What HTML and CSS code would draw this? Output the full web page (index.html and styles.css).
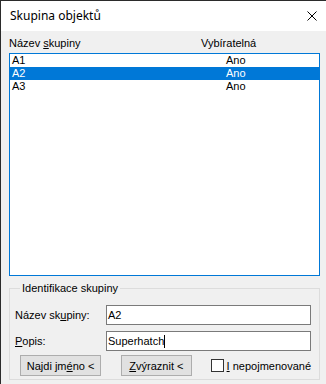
FILE: index.html
```html
<!DOCTYPE html>
<html lang="cs">
<head>
    <meta charset="UTF-8" />
    <meta name="viewport" content="width=device-width, initial-scale=1.0" />
    <title>Skupina objektů</title>
    <link rel="stylesheet" href="styles.css">
</head>
<body>

    <div class="window">
        <div class="titlebar">
            <span class="title">Skupina objektů</span>
            <svg class="close-icon" width="10" height="10" viewBox="0 0 10 10">
                <path d="M0.5 0.5 L9.5 9.5 M9.5 0.5 L0.5 9.5" stroke="#000" stroke-width="1" fill="none" />
            </svg>
        </div>

        <div class="content">
            <div class="list-header">
                <span class="col-name">Název <u>s</u>kupiny</span>
                <span class="col-select">Vybíratelná</span>
            </div>

            <div class="group-list">
                <div class="row">
                    <span class="col-name">A1</span>
                    <span class="col-value">Ano</span>
                </div>
                <div class="row selected">
                    <span class="col-name">A2</span>
                    <span class="col-value">Ano</span>
                </div>
                <div class="row">
                    <span class="col-name">A3</span>
                    <span class="col-value">Ano</span>
                </div>
            </div>

            <fieldset class="group-box">
                <legend>Identifikace skupiny</legend>

                <div class="field">
                    <label>Název sk<u>u</u>piny:</label>
                    <div class="textbox">A2</div>
                </div>
                <div class="field">
                    <label><u>P</u>opis:</label>
                    <div class="textbox">Superhatch<span class="caret"></span></div>
                </div>

                <div class="actions">
                    <button class="btn btn-find">Najdi jm<u>é</u>no &lt;</button>
                    <button class="btn btn-show"><u>Z</u>výraznit &lt;</button>
                    <span class="check">
                        <span class="check-box"></span>
                        <span><u>I</u> nepojmenované</span>
                    </span>
                </div>
            </fieldset>
        </div>
    </div>

</body>
</html>
```

FILE: styles.css
```css
/* Global styles */
body {
    margin: 0;
    width: 326px;
    height: 384px;
    overflow: hidden;
    font-family: "Liberation Sans", Arial, sans-serif;
    font-size: 11px;
    color: #000;
    background-color: #f0f0f0;
}

.window {
    height: 384px;
    border-top: 1px solid #2b2b2b;
    border-left: 1px solid #2b2b2b;
    box-sizing: border-box;
    background-color: #f0f0f0;
}

/* Title bar */
.titlebar {
    height: 30px;
    background: white;
    display: flex;
    align-items: center;
    justify-content: space-between;
    padding: 0 9px 0 9px;
}

.title {
    font-family: "Noto Sans", "Open Sans", sans-serif;
    font-size: 12px;
    margin-top: -1px;
}

.close-icon {
    display: block;
    margin-top: -1px;
}

/* Main area */
.content {
    padding: 0 6px 0 8px;
}

.list-header {
    height: 22px;
    display: flex;
    align-items: center;
    padding-top: 1px;
    box-sizing: border-box;
}

.list-header .col-name {
    width: 192px;
}

.group-list {
    height: 223px;
    border: 1px solid #0078d7;
    background: white;
    box-sizing: border-box;
}

.row {
    height: 13px;
    line-height: 13px;
    display: flex;
    padding-left: 2px;
}

.row .col-name {
    width: 214px;
}

.row.selected {
    background-color: #0078d7;
    color: white;
}

/* Group box */
.group-box {
    margin: 6px 0 0 0;
    padding: 10px 8px 0 5px;
    border: 1px solid #dcdcdc;
    height: 98px;
    box-sizing: border-box;
    min-width: 0;
}

.group-box legend {
    padding: 0 2px;
    margin-left: 5px;
    line-height: 13px;
}

.field {
    display: flex;
    align-items: center;
    margin-bottom: 6px;
}

.field + .field {
    margin-bottom: 4px;
}

.field label {
    width: 91px;
}

.textbox {
    flex: 1;
    height: 20px;
    border: 1px solid #7a7a7a;
    background: white;
    box-sizing: border-box;
    padding-left: 1px;
    display: flex;
    align-items: center;
}

.caret {
    display: inline-block;
    width: 1px;
    height: 13px;
    background: black;
}

.actions {
    display: flex;
    align-items: center;
    padding-left: 5px;
}

.btn {
    font-family: inherit;
    font-size: 11px;
    height: 21px;
    padding: 0;
    background-color: #e1e1e1;
    border: 1px solid #adadad;
    border-radius: 0;
    color: #000;
}

.btn-find {
    width: 83px;
}

.btn-show {
    width: 72px;
    margin-left: 20px;
}

.check {
    display: flex;
    align-items: center;
    margin-left: 19px;
    white-space: nowrap;
}

.check-box {
    width: 13px;
    height: 13px;
    border: 1px solid #333;
    background: white;
    box-sizing: border-box;
    margin-right: 3px;
}
```
